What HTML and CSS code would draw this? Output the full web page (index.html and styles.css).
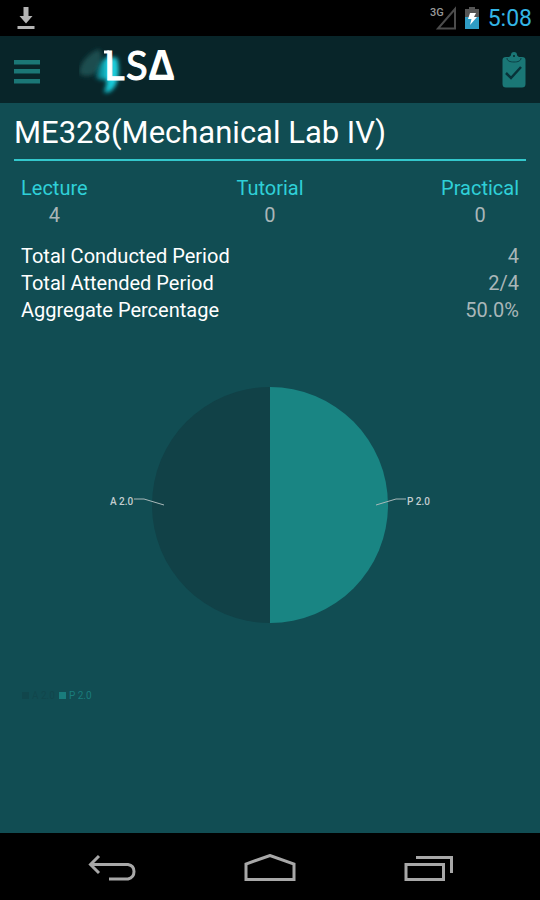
FILE: index.html
```html
<!DOCTYPE html>
<html lang="en">
<head>
  <meta charset="UTF-8">
  <meta name="viewport" content="width=device-width, initial-scale=1">
  <title>ME328(Mechanical Lab IV)</title>
  <link rel="stylesheet" href="styles.css">
</head>
<body>

  <div class="status-bar">
    <svg class="download" width="18" height="24" viewBox="0 0 18 24" aria-hidden="true">
      <path d="M6.500 1h5v9h4L9 17.500 2.500 10h4z M0.500 20h17v3h-17z" fill="#b4b4b4"/>
    </svg>
    <div class="status-icons">
      <svg width="26" height="26" viewBox="0 0 26 26" aria-hidden="true">
        <path d="M25 4v19.500H8z" fill="none" stroke="#4c4c4c" stroke-width="2"/>
        <text x="0" y="11" class="network">3G</text>
      </svg>
      <svg width="16" height="24" viewBox="0 0 16 24" aria-hidden="true">
        <path d="M5 1h6v2h4v8H1V3h4z" fill="#555"/>
        <path d="M1 11h14v12H1z" fill="#2f9cc4"/>
        <path d="M6 7h6l-2 4h3l-7 8 1.500-6H4z" fill="#fff"/>
      </svg>
      <span class="clock">5:08</span>
    </div>
  </div>

  <header class="action-bar">
    <button class="icon-button" type="button" aria-label="Menu">
      <svg width="26" height="24" viewBox="0 0 26 24">
        <path d="M0 0h26v4.500H0z M0 9h26v4.500H0z M0 19h26v4.500H0z" fill="#1b7776"/>
      </svg>
    </button>
    <svg class="logo" width="104" height="66" viewBox="0 0 104 66" role="img" aria-label="LSA">
      <defs>
        <filter id="soft" x="-50%" y="-50%" width="200%" height="200%"><feGaussianBlur stdDeviation="2"/></filter>
        <linearGradient id="drop" x1="0" x2="1">
          <stop offset="0" stop-color="#0b6670"/>
          <stop offset="0.500" stop-color="#14c5d3"/>
          <stop offset="1" stop-color="#22d6e4"/>
        </linearGradient>
      </defs>
      <path d="M0 36C1 26 8 17 20 12c4 6 3 15-1 22-4 5-14 7-19 2z" fill="#1c4e50" filter="url(#soft)"/>
      <path d="M17 41c1-11 6-19 12-21l9 1c3 10 2 26-5 32-3 3-8 4-8 1 2-3 3-8 2-12-3 1-7 1-10-1z" fill="url(#drop)" filter="url(#soft)"/>
      <path d="M25 15h5" stroke="#fff" stroke-width="3"/>
      <text y="43" fill="#fff"><tspan x="25" class="logo-light">L</tspan><tspan x="47" class="logo-light">S</tspan><tspan x="69" class="logo-bold">Δ</tspan></text>
    </svg>
    <button class="icon-button attendance" type="button" aria-label="Attendance">
      <svg width="24" height="38" viewBox="0 0 24 38">
        <path d="M4 6h3c1-1 2-1 2-2a3 3 0 0 1 6 0c0 1 1 1 2 2h3q3.500 0 3.500 3v24q0 3.500-3.500 3.500H4Q0.500 36.500 0.500 33V9q0-3 3.500-3z" fill="#1a7776"/>
        <path d="M5 7c0 3 3 4 7 4s7-1 7-4" fill="none" stroke="#0c3f45" stroke-width="1"/>
        <circle cx="12" cy="5" r="1" fill="#082529"/>
        <path d="M4 22l5 5 10-11" fill="none" stroke="#083239" stroke-width="2.500"/>
      </svg>
    </button>
  </header>

  <main class="content">
    <h1>ME328(Mechanical Lab IV)</h1>

    <dl class="types">
      <div><dt>Lecture</dt><dd>4</dd></div>
      <div><dt>Tutorial</dt><dd>0</dd></div>
      <div><dt>Practical</dt><dd>0</dd></div>
    </dl>

    <dl class="totals">
      <div><dt>Total Conducted Period</dt><dd>4</dd></div>
      <div><dt>Total Attended Period</dt><dd>2/4</dd></div>
      <div><dt>Aggregate Percentage</dt><dd>50.0%</dd></div>
    </dl>

    <svg class="pie" width="340" height="238" viewBox="0 0 340 238" role="img" aria-label="Absent 2, present 2">
      <path d="M170 1a118 118 0 0 0 0 236z" fill="#114147"/>
      <path d="M170 1a118 118 0 0 1 0 236z" fill="#198583"/>
      <path d="M34 113h10l20 6 M306 113h-10l-20 6" class="leader"/>
      <text x="10" y="119">A 2.0</text>
      <text x="307" y="119">P 2.0</text>
    </svg>

    <ul class="legend">
      <li class="absent">A 2.0</li>
      <li class="present">P 2.0</li>
    </ul>
  </main>

  <nav class="nav-bar">
    <button type="button" aria-label="Back">
      <svg width="48" height="28" viewBox="0 0 48 28">
        <path d="M11 2L2.500 10.500 11 19 M3 10.500h37q6 1 6 7t-6 7.500H21" />
      </svg>
    </button>
    <button type="button" aria-label="Home">
      <svg width="52" height="28" viewBox="0 0 52 28">
        <path d="M2 25.500V10L26 1.500 50 10v15.500z" />
      </svg>
    </button>
    <button type="button" aria-label="Recent apps">
      <svg width="50" height="28" viewBox="0 0 50 28">
        <path d="M2 10.500h37.500v15H2z M12 3.500h35.500V19" />
      </svg>
    </button>
  </nav>

</body>
</html>
```
FILE: styles.css
```css
* {
  box-sizing: border-box;
}

body {
  margin: 0;
  min-height: 100vh;
  display: flex;
  flex-direction: column;
  background: #114d53;
  color: #fff;
  font-family: Roboto, "Liberation Sans", sans-serif;
  font-size: 20px;
  line-height: 27px;
}

h1, dl, dd, ul {
  margin: 0;
  padding: 0;
}

button {
  padding: 0;
  border: 0;
  background: none;
  cursor: pointer;
}

svg {
  display: block;
}

.status-bar {
  display: flex;
  justify-content: space-between;
  align-items: center;
  height: 36px;
  padding: 0 8px 0 17px;
  background: #000;
}

.status-icons {
  display: flex;
  align-items: center;
  gap: 8px;
}

.network {
  font-size: 11px;
  font-weight: 500;
  fill: #999;
}

.clock {
  font-size: 23px;
  color: #33b5e5;
}

.action-bar {
  display: flex;
  align-items: center;
  height: 67px;
  padding: 0 14px;
  background: #082529;
}

.action-bar .icon-button {
  padding-top: 5px;
}

.logo {
  margin-left: 39px;
}

.logo-light {
  font-family: Lato, sans-serif;
  font-size: 40px;
  stroke: #fff;
  stroke-width: 1px;
}

.logo-bold {
  font-family: "Open Sans", sans-serif;
  font-size: 41px;
  font-weight: 700;
}

.action-bar .attendance {
  margin-left: auto;
  padding-top: 0;
}

.content {
  flex: 1;
  padding: 9px 14px 0;
}

h1 {
  padding-bottom: 5px;
  border-bottom: 2px solid #33c8cc;
  font-size: 31px;
  font-weight: 400;
  line-height: 42px;
}

.types {
  display: grid;
  grid-template-columns: 1fr auto 1fr;
  padding: 14px 7px;
  text-align: center;
}

.types div:first-child {
  justify-self: start;
}

.types div:last-child {
  justify-self: end;
}

.types dt {
  color: #2fd0d8;
}

dd {
  color: #a9b6b8;
}

.totals {
  padding: 0 7px;
}

.totals div {
  display: flex;
  justify-content: space-between;
}

.pie {
  margin: 62px auto 0;
}

.pie text {
  font-size: 10px;
  font-weight: 500;
  fill: #c4ced0;
}

.leader {
  fill: none;
  stroke: #a9b9ba;
  stroke-width: 1;
}

.legend {
  display: flex;
  gap: 4px;
  margin-top: 58px;
  padding: 0 8px;
  list-style: none;
  font-size: 10px;
}

.legend li {
  display: flex;
  align-items: center;
  gap: 3px;
}

.legend li::before {
  content: "";
  width: 7px;
  height: 7px;
  background: currentColor;
}

.absent {
  color: #11464c;
}

.present {
  color: #197c7c;
}

.nav-bar {
  display: flex;
  justify-content: center;
  align-items: center;
  gap: 108px;
  height: 67px;
  padding: 2px 0 0 2px;
  background: #000;
}

.nav-bar path {
  fill: none;
  stroke: #a8a8a8;
  stroke-width: 3;
}
```
